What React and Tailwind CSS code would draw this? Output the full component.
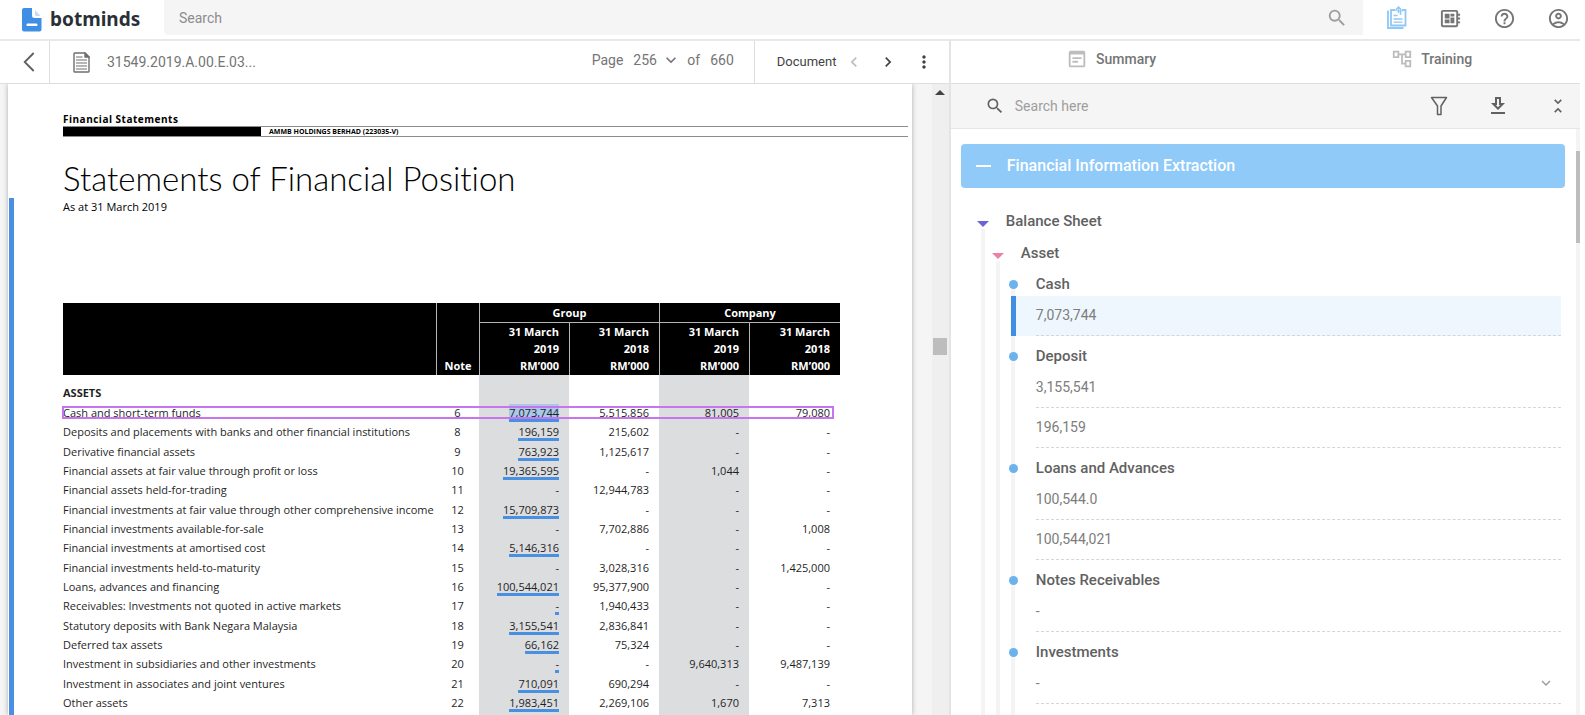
import React, { useState } from "react";
import {
  MdHelpOutline,
  MdKeyboardArrowDown,
  MdKeyboardArrowLeft,
  MdKeyboardArrowRight,
  MdMoreVert,
  MdOutlineAccountCircle,
  MdOutlineAccountTree,
  MdOutlineDeveloperBoard,
  MdOutlineDownload,
  MdOutlineWysiwyg,
  MdSearch,
  MdUnfoldLess,
} from "react-icons/md";

const rows = [
  ["Cash and short-term funds", 6, "7,073,744", "5,515,856", "81,005", "79,080"],
  ["Deposits and placements with banks and other financial institutions", 8, "196,159", "215,602", "-", "-"],
  ["Derivative financial assets", 9, "763,923", "1,125,617", "-", "-"],
  ["Financial assets at fair value through profit or loss", 10, "19,365,595", "-", "1,044", "-"],
  ["Financial assets held-for-trading", 11, "-", "12,944,783", "-", "-"],
  ["Financial investments at fair value through other comprehensive income", 12, "15,709,873", "-", "-", "-"],
  ["Financial investments available-for-sale", 13, "-", "7,702,886", "-", "1,008"],
  ["Financial investments at amortised cost", 14, "5,146,316", "-", "-", "-"],
  ["Financial investments held-to-maturity", 15, "-", "3,028,316", "-", "1,425,000"],
  ["Loans, advances and financing", 16, "100,544,021", "95,377,900", "-", "-"],
  ["Receivables: Investments not quoted in active markets", 17, "-", "1,940,433", "-", "-"],
  ["Statutory deposits with Bank Negara Malaysia", 18, "3,155,541", "2,836,841", "-", "-"],
  ["Deferred tax assets", 19, "66,162", "75,324", "-", "-"],
  ["Investment in subsidiaries and other investments", 20, "-", "-", "9,640,313", "9,487,139"],
  ["Investment in associates and joint ventures", 21, "710,091", "690,294", "-", "-"],
  ["Other assets", 22, "1,983,451", "2,269,106", "1,670", "7,313"],
];

// notes whose dash is not linked to an extracted value
const unlinkedNotes = [11, 13, 15];

const fields = [
  { name: "Cash", values: ["7,073,744"] },
  { name: "Deposit", values: ["3,155,541", "196,159"] },
  { name: "Loans and Advances", values: ["100,544.0", "100,544,021"] },
  { name: "Notes Receivables", values: ["-"] },
  { name: "Investments", values: ["-"], expandable: true },
];

function Logo() {
  return (
    <a href="#" className="flex w-[164px] shrink-0 items-center gap-2 pl-[22px]">
      <svg viewBox="0 0 20 24" className="h-6 w-5">
        <path d="M2 0h8v7.500a2.500 2.500 0 0 0 2.500 2.500H19.500V21.500a2 2 0 0 1-2 2H2a2 2 0 0 1-2-2V2a2 2 0 0 1 2-2z" fill="#3f8fe4" />
        <path d="M13 2l5.500 6H14.500a1.500 1.500 0 0 1-1.500-1.500z" fill="#c3dcf7" />
        <rect x="4.500" y="15.500" width="11" height="2.600" rx="1.200" fill="#fff" />
      </svg>
      <span className="font-['Noto_Sans'] text-[19px] font-bold text-[#2b3038]">botminds</span>
    </a>
  );
}

function PinnedNoteIcon() {
  return (
    <svg viewBox="0 0 22 24" className="h-6 w-[22px]" fill="none" stroke="#90c8f6" strokeWidth="1.800">
      <path d="M2 4.500v17.500h15.500" />
      <path d="M9.500 4H5v15.500h14.500V4H16" />
      <path d="M7.500 9.500h4M7.500 13h9M7.500 16.200h9" strokeWidth="1.300" />
      <path d="M10.500 4.500V3l2-2 2 2v6" strokeWidth="1.500" />
      <path d="M12.500 1v6M10.500 5h6" strokeWidth="1.200" />
    </svg>
  );
}

function BackIcon() {
  return (
    <svg viewBox="0 0 12 20" className="h-5 w-3" fill="none" stroke="#5f5f5f" strokeWidth="1.800">
      <path d="M10.700 1L1.700 10l9 9" />
    </svg>
  );
}

function FileIcon() {
  return (
    <svg viewBox="0 0 17 21" className="h-[21px] w-[17px]" fill="none" stroke="#6f6f6f" strokeWidth="1.400">
      <path d="M1.700 1h10.300l4 4v14.300a.8.8 0 0 1-.8.700H1.700a.8.8 0 0 1-.7-.700V1.700A.8.800 0 0 1 1.700 1z" />
      <path d="M12 1v4h4z" fill="#6f6f6f" />
      <path d="M3 5h6.500M3 8h11M3 11h11M3 14h11M3 17h11" strokeWidth="1.100" />
    </svg>
  );
}

function FilterIcon() {
  return (
    <svg viewBox="0 0 18 20" className="h-5 w-[18px]" fill="none" stroke="#616161" strokeWidth="1.500" strokeLinejoin="round">
      <path d="M1.500 1.500h15L11 10v8.500H7.500V10z" />
    </svg>
  );
}

function TopBar() {
  return (
    <header className="flex h-[41px] shrink-0 border-b-2 border-[#e8e8e8]">
      <Logo />
      <div className="flex h-[35px] flex-1 items-center rounded-bl bg-[#f5f5f5] pr-[15px]">
        <input aria-label="Search" placeholder="Search" className="h-full flex-1 bg-transparent px-[15px] text-sm outline-none placeholder:text-[#8c8c8c]" />
        <button aria-label="Run search">
          <MdSearch className="size-[22px] text-[#9e9e9e]" />
        </button>
      </div>
      <nav className="flex h-9 items-center gap-[31px] pl-[23px] pr-[10px] text-[#757575]">
        <button aria-label="Notes"><PinnedNoteIcon /></button>
        <button aria-label="Board"><MdOutlineDeveloperBoard className="size-[23px]" /></button>
        <button aria-label="Help"><MdHelpOutline className="size-[23px]" /></button>
        <button aria-label="Account"><MdOutlineAccountCircle className="size-[23px]" /></button>
      </nav>
    </header>
  );
}

function DocumentToolbar() {
  return (
    <div className="flex h-[43px] shrink-0 items-center border-b border-[#dedede] text-[#757575]">
      <button aria-label="Back" className="flex h-full w-[50px] items-center justify-center border-r border-[#dedede] pl-2">
        <BackIcon />
      </button>
      <div className="flex items-center gap-[17px] pl-[23px]">
        <FileIcon />
        <span className="text-sm">31549.2019.A.00.E.03...</span>
      </div>
      <div className="ml-auto flex items-center gap-[10px] pr-5 pb-1 text-sm">
        <label htmlFor="page">Page</label>
        <span className="relative flex items-center">
          <select id="page" className="w-11 appearance-none bg-transparent outline-none">
            <option>256</option>
          </select>
          <MdKeyboardArrowDown className="pointer-events-none absolute -right-1 size-5" />
        </span>
        <span>of</span>
        <span>660</span>
      </div>
      <div className="flex h-full w-[195px] items-center border-l border-[#dedede] pl-[22px] text-[13px] text-[#424242]">
        <span>Document</span>
        <button aria-label="Previous document" className="ml-2"><MdKeyboardArrowLeft className="size-5 text-[#bdbdbd]" /></button>
        <button aria-label="Next document" className="ml-[14px]"><MdKeyboardArrowRight className="size-5" /></button>
        <button aria-label="More" className="ml-4"><MdMoreVert className="size-5" /></button>
      </div>
    </div>
  );
}

function LinkedValue({ value, selected }) {
  return (
    <span className={`inline-block h-[18px] border-b-3 border-[#4a90e2] leading-[18px] ${selected ? "bg-[#a9c8ea]" : ""}`}>
      {value}
    </span>
  );
}

function PositionTable() {
  return (
    <table className="mt-[88px] w-[777px] table-fixed border-separate border-spacing-0 text-[11px] text-[#1f1f1f]">
      <colgroup>
        <col />
        <col className="w-[43px]" />
        <col className="w-[90px]" />
        <col className="w-[90px]" />
        <col className="w-[90px]" />
        <col className="w-[91px]" />
      </colgroup>
      <thead className="bg-black text-white">
        <tr className="h-5">
          <th rowSpan={2}></th>
          <th rowSpan={2} className="border-l border-[#b5b5b5] pb-px align-bottom leading-[17px]">Note</th>
          <th colSpan={2} className="border-b border-l border-[#b5b5b5] leading-[17px]">Group</th>
          <th colSpan={2} className="border-b border-l border-[#b5b5b5] leading-[17px]">Company</th>
        </tr>
        <tr className="h-[52px]">
          {["2019", "2018", "2019", "2018"].map((year, i) => (
            <th key={i} className="border-l border-[#b5b5b5] pr-[10px] align-top text-right leading-[17px]">31 March<br />{year}<br />RM’000</th>
          ))}
        </tr>
      </thead>
      <tbody>
        <tr className="h-7">
          <th className="pt-2 text-left leading-4">ASSETS</th>
          <td></td>
          <td className="bg-[#dcdddf]"></td>
          <td></td>
          <td className="bg-[#dcdddf]"></td>
          <td></td>
        </tr>
        {rows.map(([label, note, g19, g18, c19, c18]) => (
          <tr key={note} className="relative h-[19px] nth-[3n]:h-5">
            <td className="whitespace-nowrap leading-4">
              {label}
              {note === 6 && <span className="absolute top-[3px] -left-px right-[6px] h-[13px] border-2 border-[#c774ee]" />}
            </td>
            <td className="text-center leading-4">{note}</td>
            <td className="bg-[#dcdddf] pr-[10px] text-right leading-4">
              {unlinkedNotes.includes(note) ? g19 : <LinkedValue value={g19} selected={note === 6} />}
            </td>
            <td className="pr-[10px] text-right leading-4">{g18}</td>
            <td className="bg-[#dcdddf] pr-[10px] text-right leading-4">{c19}</td>
            <td className="pr-[10px] text-right leading-4">{c18}</td>
          </tr>
        ))}
        <tr className="h-7">
          <td></td>
          <td></td>
          <td className="bg-[#dcdddf]"></td>
          <td></td>
          <td className="bg-[#dcdddf]"></td>
          <td></td>
        </tr>
      </tbody>
    </table>
  );
}

function DocumentPage() {
  return (
    <div className="flex min-h-0 flex-1 overflow-hidden bg-[#f5f5f5]">
      <div className="relative ml-2 min-w-0 flex-1 bg-white font-['Open_Sans'] shadow-[0_0_5px_rgba(0,0,0,0.3)]">
        <div className="absolute top-[114px] bottom-0 left-px w-[5px] bg-[#4a90e2]" />
        <div className="pl-[55px] pr-1 pt-7">
          <p className="text-[10px] font-bold leading-[14px] tracking-wider">Financial Statements</p>
          <div className="flex h-[11px] border-y border-[#8c8c8c]">
            <div className="w-[198px] bg-black" />
            <span className="pl-2 text-[7px] font-bold leading-[9px]">AMMB HOLDINGS BERHAD (223035-V)</span>
          </div>
          <h1 className="mt-5 font-['Lato'] text-[33px] font-light leading-[42px] [font-variant-ligatures:none]">Statements of Financial Position</h1>
          <p className="text-[11px] leading-4">As at 31 March 2019</p>
          <PositionTable />
        </div>
      </div>
      <div className="ml-5 w-[17px] bg-[#efefef]">
        <div className="mx-auto mt-[6px] size-0 border-x-[5px] border-b-[5px] border-x-transparent border-b-[#424242]" />
        <div className="mx-auto mt-[243px] h-[17px] w-[14px] bg-[#bdbdbd]" />
      </div>
    </div>
  );
}

function FieldGroup({ field, active, onSelect }) {
  return (
    <section className="relative">
      <span className="absolute -left-[19px] top-[7px] size-[9px] rounded-full bg-[#6cb2ec]" />
      <h4 className="pl-2 text-[15px] font-medium leading-[23px] text-[#616161]">{field.name}</h4>
      {field.values.map((value) => {
        const id = `${field.name}-${value}`;
        return (
          <button
            key={id}
            onClick={() => onSelect(id)}
            className={
              active === id
                ? "-ml-[17px] flex w-[calc(100%+17px)] border-l-[5px] border-[#3f8fe4] bg-[#eff7fe] pl-5 text-left"
                : "flex w-full pl-2 text-left"
            }
          >
            <span className="flex h-10 flex-1 items-center justify-between border-b border-dashed border-[#d6d6d6] pr-[6px] pb-[2px] text-sm text-[#7d7d7d]">
              {value}
              {field.expandable && <MdKeyboardArrowDown className="size-[18px] text-[#9e9e9e]" />}
            </span>
          </button>
        );
      })}
    </section>
  );
}

function ExtractionPanel() {
  const [active, setActive] = useState("Cash-7,073,744");

  return (
    <aside className="flex min-w-0 flex-[630_1_0%] flex-col">
      <div className="h-[43px] shrink-0 border-b border-[#dedede]">
        <div className="-mr-3 grid h-9 grid-cols-2 text-sm font-medium text-[#757575]">
          <button className="flex items-center justify-center gap-2">
            <MdOutlineWysiwyg className="size-[22px] text-[#bdbdbd]" />
            Summary
          </button>
          <button className="flex items-center justify-center gap-2">
            <MdOutlineAccountTree className="size-[22px] text-[#bdbdbd]" />
            Training
          </button>
        </div>
      </div>
      <div className="flex h-[45px] shrink-0 items-center border-b border-[#e6e6e6] bg-[#f5f5f5] pl-[34px] pr-3 text-[#616161]">
        <MdSearch className="size-5" />
        <input aria-label="Search here" placeholder="Search here" className="min-w-0 flex-1 bg-transparent px-[10px] text-sm outline-none placeholder:text-[#9e9e9e]" />
        <div className="flex items-center gap-[38px]">
          <button aria-label="Filter"><FilterIcon /></button>
          <button aria-label="Download"><MdOutlineDownload className="size-6" /></button>
          <button aria-label="Collapse all"><MdUnfoldLess className="size-5" /></button>
        </div>
      </div>
      <div className="flex min-h-0 flex-1 overflow-hidden">
        <div className="min-w-0 flex-1 pl-[10px] pr-[11px] pt-[15px]">
          <button className="flex h-11 w-full items-center gap-4 rounded bg-[#90caf9] pl-[15px] text-base font-medium text-white">
            <span className="h-[2px] w-[15px] bg-white" />
            Financial Information Extraction
          </button>
          <div className="relative mt-[21px] h-[900px] pl-[45px] pr-1 text-[#616161]">
            <span className="absolute left-4 top-3 size-0 border-x-[6px] border-t-[6px] border-x-transparent border-t-[#6c63d9]" />
            <span className="absolute bottom-0 left-5 top-5 w-1 bg-[#f4f4f4]" />
            <h2 className="text-[15px] font-medium leading-6">Balance Sheet</h2>
            <div className="relative mt-2 pl-[15px]">
              <span className="absolute -left-[14px] top-3 size-0 border-x-[6px] border-t-[6px] border-x-transparent border-t-[#ee7fa6]" />
              <span className="absolute -left-[10px] top-5 h-[900px] w-1 bg-[#f4f4f4]" />
              <h3 className="text-[15px] font-medium leading-6">Asset</h3>
              <div className="relative mt-2 pl-[7px]">
                <span className="absolute left-[-10px] top-3 h-[900px] w-1 bg-[#f4f4f4]" />
                <div className="flex flex-col gap-[9px]">
                  {fields.map((field) => (
                    <FieldGroup key={field.name} field={field} active={active} onSelect={setActive} />
                  ))}
                </div>
              </div>
            </div>
          </div>
        </div>
        <div className="w-1 bg-[#f4f4f4] pt-[22px]">
          <div className="h-[92px] bg-[#bdbdbd]" />
        </div>
      </div>
    </aside>
  );
}

export default function App() {
  return (
    <div className="flex h-screen flex-col overflow-hidden bg-white pr-[5px] font-['Roboto']">
      <TopBar />
      <div className="flex min-h-0 flex-1">
        <main className="flex min-w-0 flex-[950_1_0%] flex-col border-r-2 border-[#e4e4e4]">
          <DocumentToolbar />
          <DocumentPage />
        </main>
        <ExtractionPanel />
      </div>
    </div>
  );
}
